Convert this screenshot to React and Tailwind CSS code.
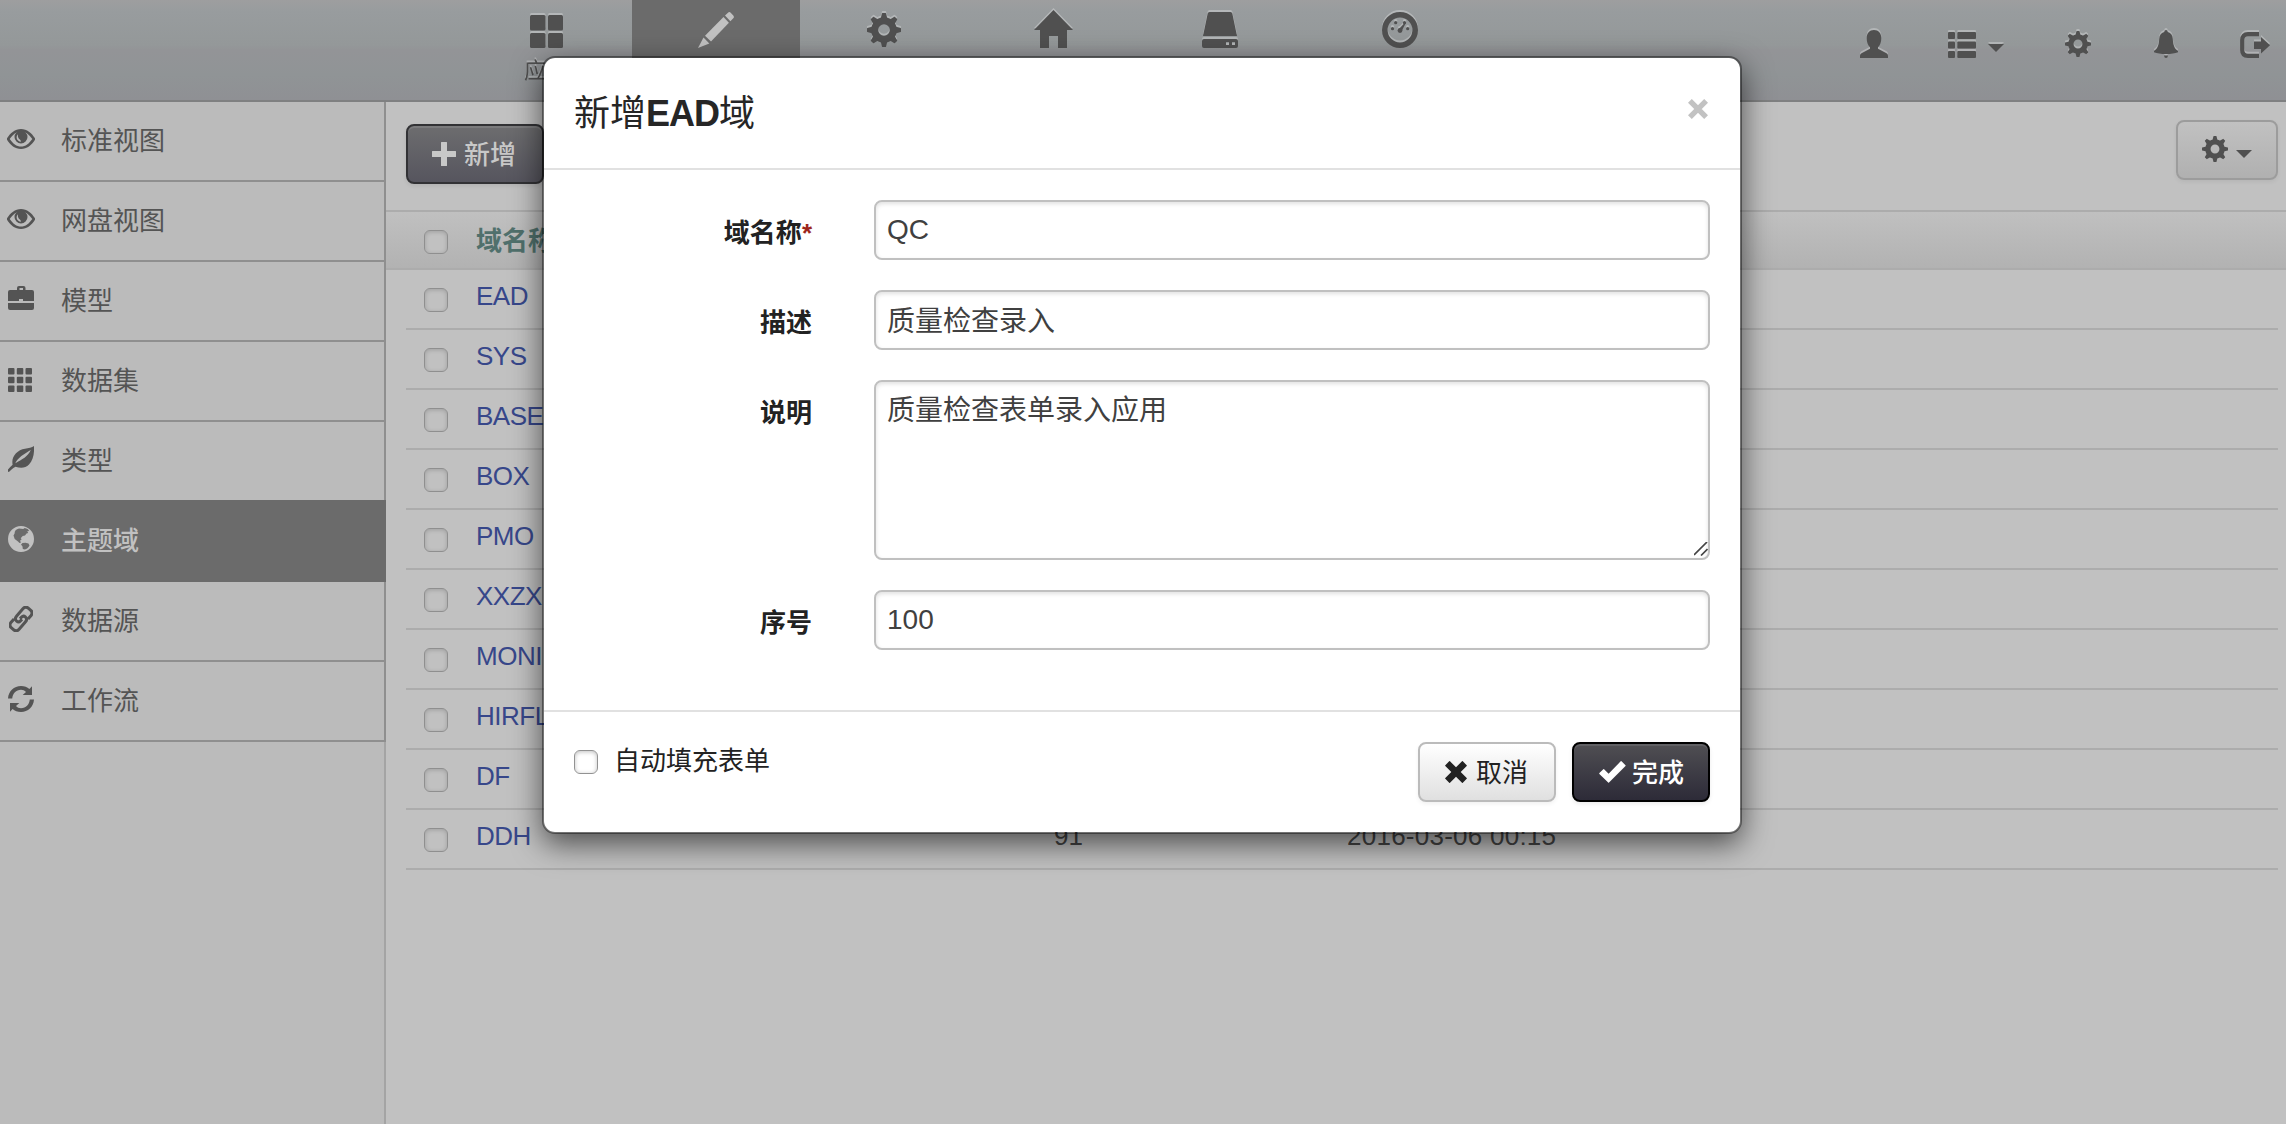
import React from "react";

const svgBase = "block shrink-0 fill-current";

const ThLarge = ({ className }) => (
  <svg viewBox="0 0 33 33" className={`${svgBase} ${className}`}>
    <rect width="15.5" height="15.5" rx="1.5" />
    <rect x="18" width="15" height="15.5" rx="1.5" />
    <rect y="18" width="15.5" height="15" rx="1.5" />
    <rect x="18" y="18" width="15" height="15" rx="1.5" />
  </svg>
);

const Pencil = ({ className }) => (
  <svg viewBox="0 0 36 36" className={`${svgBase} ${className}`}>
    <path d="M30 .7c.8-.8 1.9-.8 2.7 0l2.6 2.9c.8.8.8 1.9 0 2.7L32.4 9.2 27 3.5z" />
    <path d="M25.5 5l5.4 5.7L13 29.6 7 23.8z" />
    <path d="M5.500 25.500l5.800 6L0 36z" />
  </svg>
);

const Cog = ({ className }) => (
  <svg viewBox="0 0 34 34" className={`${svgBase} ${className}`}>
    <circle cx="17" cy="17" r="9.3" fill="none" stroke="currentColor" strokeWidth="7" />
    {[0, 45, 90, 135, 180, 225, 270, 315].map((a) => (
      <path
        key={a}
        transform={`rotate(${a} 17 17)`}
        d="M15 .3q.2-.3.500-.3h3q.3 0 .5.300L20.400 5.800h-6.800z"
      />
    ))}
  </svg>
);

const Home = ({ className }) => (
  <svg viewBox="0 0 39 38" className={`${svgBase} ${className}`}>
    <path d="M19.500 0L39 20h-6v18h-9V26h-9v12H6V20H0z" />
  </svg>
);

const Hdd = ({ className }) => (
  <svg viewBox="0 0 36 36" className={`${svgBase} ${className}`}>
    <path d="M7.500 0h21q1.500 0 1.800 1.500L35 24H1L5.700 1.500Q6 0 7.500 0z" />
    <path
      fillRule="evenodd"
      d="M2 27h32q2 0 2 2v5q0 2-2 2H2q-2 0-2-2v-5q0-2 2-2zM24 30v3h3v-3zM30 30v3h3v-3z"
    />
  </svg>
);

const Dashboard = ({ className }) => (
  <svg viewBox="0 0 36 36" className={`${svgBase} ${className}`}>
    <circle cx="18" cy="18" r="15.2" fill="none" stroke="currentColor" strokeWidth="5.6" />
    <circle cx="18" cy="18.5" r="2.4" />
    <circle cx="13.700" cy="10.700" r="1.6" />
    <circle cx="22.500" cy="10.700" r="1.6" />
    <circle cx="10.500" cy="16.700" r="1.6" />
    <circle cx="25.700" cy="16.700" r="1.6" />
    <path d="M16.500 17.500l6.500-7 .8.6L19.500 19.500z" />
  </svg>
);

const User = ({ className }) => (
  <svg viewBox="0 0 28 28" className={`${svgBase} ${className}`}>
    <path d="M14 0c4.500 0 7.300 3 7.300 8 0 4-1 7-3.300 9.200v1.600l8.500 4.500q1.500.9 1.500 2.400V28H0v-2.300q0-1.500 1.500-2.400l8.500-4.500v-1.600C7.700 15 6.700 12 6.700 8 6.700 3 9.500 0 14 0z" />
  </svg>
);

const ThList = ({ className }) => (
  <svg viewBox="0 0 28 26" className={`${svgBase} ${className}`}>
    {[0, 9.5, 19].map((y) => (
      <g key={y}>
        <rect y={y} width="7" height="7" rx="1" />
        <rect x="9.3" y={y} width="18.7" height="7" rx="1" />
      </g>
    ))}
  </svg>
);

const Bell = ({ className }) => (
  <svg viewBox="0 0 24 28" className={`${svgBase} ${className}`}>
    <path d="M12 0q1.600 0 1.800 2c3.400 1 4.700 3.500 5 7 .3 6 1.500 9.500 5.200 12v1.200c-3 1.200-7 1.800-12 1.800S3 23.400 0 22.200V21c3.700-2.500 4.900-6 5.200-12 .300-3.500 1.600-6 5-7Q10.400 0 12 0z" />
    <path d="M10 25.400h4Q13.600 28 12 28t-2-2.600z" />
  </svg>
);

const LogOut = ({ className }) => (
  <svg viewBox="0 0 30 26" className={`${svgBase} ${className}`}>
    <path d="M19 2.200H8Q2.200 2.200 2.200 8v10Q2.200 23.800 8 23.800h11" fill="none" stroke="currentColor" strokeWidth="4.2" />
    <path d="M14 9.500h7V5l9 8.200-9 8.300V17h-7z" />
  </svg>
);

const Eye = ({ className }) => (
  <svg viewBox="0 0 28 20" className={`${svgBase} ${className}`}>
    <path
      fillRule="evenodd"
      d="M14 0c6 0 10.600 4 14 9.300v1.400C24.600 16 20 20 14 20S3.400 16 0 10.700V9.300C3.400 4 8 0 14 0zM14 2.400C9.600 2.400 5.800 5.500 2.700 10c3.100 4.500 6.900 7.600 11.300 7.600s8.200-3.100 11.300-7.600C22.200 5.500 18.400 2.400 14 2.400z"
    />
    <path
      fillRule="evenodd"
      d="M14 1.500a6.500 6.500 0 1 1 0 13 6.500 6.500 0 0 1 0-13zM10.700 5.300C8.700 8 9.600 11.700 13.500 13c.6-1 .2-2-.7-2.600-1.700-1.100-2-2.900-2.100-5.100z"
    />
  </svg>
);

const Briefcase = ({ className }) => (
  <svg viewBox="0 0 26 24" className={`${svgBase} ${className}`}>
    <path
      fillRule="evenodd"
      d="M11 0h4.500Q17.500 0 17.500 2v2H24q2 0 2 2v9H15v-2h-4v2H0V6q0-2 2-2h7V2q0-2 2-2zM11.500 2v2H15V2z"
    />
    <path d="M0 17h26v5q0 2-2 2H2q-2 0-2-2z" />
  </svg>
);

const Th = ({ className }) => (
  <svg viewBox="0 0 24 24" className={`${svgBase} ${className}`}>
    {[0, 8.8, 17.5].map((y) =>
      [0, 8.8, 17.5].map((x) => <rect key={`${x}-${y}`} x={x} y={y} width="6.5" height="6.5" rx="1" />)
    )}
  </svg>
);

const Leaf = ({ className }) => (
  <svg viewBox="0 0 26 26" className={`${svgBase} ${className}`}>
    <path
      fillRule="evenodd"
      d="M26 0c.4 8-.8 14-5 18.500-3.500 3.700-8.500 3.700-13.500 2.200C5 22 3 23.500 1.500 25.500L0 26v-2.500C1.500 21.500 3 20 4.600 18.700 3 10.500 9 4 17 2.700 20.500 2.200 24 1.500 26 0zM22.800 4C18 7 12.500 9.500 8 15.800l-.6 1.400C14 13.500 20 10.500 22.800 4z"
    />
  </svg>
);

const Globe = ({ className }) => (
  <svg viewBox="0 0 26 26" className={`${svgBase} ${className}`}>
    <path
      fillRule="evenodd"
      d="M13 0a13 13 0 1 1 0 26 13 13 0 0 1 0-26zM11 2.500C8 3 6.500 5 6.600 7.500L5.500 9.500l1.200 3.500L10 15.500l1.500 1.500 1.500-.500-1-1.800 1.700-1.400-1-1 2-2.300 2.300-.5 1.500-2 1.700-.5-1-1.700 2-.3-1.500-2-3-1-1.500 1zM14.500 17l-1.500 1.500 1.500 2 .3 2.500 2 .6c2-.6 3.500-2 4.700-4.200l-1-1.900-3-.8z"
    />
  </svg>
);

const Link = ({ className }) => (
  <svg viewBox="0 0 24 26" className={`${svgBase} ${className}`}>
    <g transform="translate(12 13) rotate(-49)" fill="none" stroke="currentColor" strokeWidth="3">
      <path d="M4.500 5.300H9Q13 5.300 13 1.300V-1.300Q13-5.300 9-5.300H-.5Q-4.500-5.300-4.500-1.800Q-4.500.8-1.500.8H.5" />
      <path d="M-4.500-5.300H-9Q-13-5.300-13-1.300V1.300Q-13 5.300-9 5.300H.5Q4.500 5.300 4.500 1.800Q4.500-.8 1.500-.8H-.5" />
    </g>
  </svg>
);

const Refresh = ({ className }) => (
  <svg viewBox="0 0 26 26" className={`${svgBase} ${className}`}>
    <path d="M0 12.500C.5 5 6 0 13 0c3.500 0 6.200 1 8.400 3L24 .3v8.700h-9.300l3.300-3C16.600 4.500 15 3.800 13 3.800c-5 0-8.300 3.700-8.800 8.700z" />
    <path d="M26 13.500C25.500 21 20 26 13 26c-3.500 0-6.200-1-8.400-3L2 25.700V17h9.300L8 20c1.400 1.500 3 2.200 5 2.200 5 0 8.300-3.700 8.800-8.700z" />
  </svg>
);

const Plus = ({ className }) => (
  <svg viewBox="0 0 24 24" className={`${svgBase} ${className}`}>
    <path d="M9.500 0h5q.5 0 .5.500V9h8.500q.5 0 .5.500v5q0 .5-.5.500H15v8.500q0 .5-.5.500h-5q-.5 0-.5-.5V15H.5q-.5 0-.5-.5v-5Q0 9 .5 9H9V.5Q9 0 9.500 0z" />
  </svg>
);

const Remove = ({ className }) => (
  <svg viewBox="0 0 22 22" className={`${svgBase} ${className}`}>
    <path d="M5 .3L11 6.300l6-6q.4-.4.8 0l3.900 3.900q.4.400 0 .8L15.700 11l6 6q.4.400 0 .8l-3.900 3.900q-.4.400-.8 0l-6-6-6 6q-.4.400-.8 0L.3 17.800q-.4-.4 0-.8l6-6-6-6q-.4-.4 0-.8L4.200.3q.4-.4.8 0z" />
  </svg>
);

const Ok = ({ className }) => (
  <svg viewBox="0 0 27 22" className={`${svgBase} ${className}`}>
    <path d="M21.700.3q.4-.4.8 0l4 3.900q.4.400 0 .8L10 21.600q-.4.400-.8 0L.4 12.900q-.4-.4 0-.8l3.900-3.900q.4-.4.8 0l4.500 4.500z" />
  </svg>
);

const Close = ({ className }) => (
  <svg viewBox="0 0 20 20" className={`block shrink-0 ${className}`} fill="none" stroke="currentColor" strokeWidth="5.4">
    <path d="M1.900 1.900L18.100 18.100M18.100 1.900L1.900 18.100" />
  </svg>
);

const Caret = ({ className }) => (
  <svg viewBox="0 0 16 8" className={`${svgBase} ${className}`}>
    <path d="M0 0h16L8 8z" />
  </svg>
);

const etched = "[filter:drop-shadow(0_-2px_0_rgba(255,255,255,0.28))]";

const tabs = [
  { icon: ThLarge, size: "w-[33px] h-[33px]", pad: "pt-[15px]", width: "w-[172px]", label: "应用" },
  { icon: Pencil, size: "w-9 h-9", pad: "pt-3", width: "w-[168px]", active: true },
  { icon: Cog, size: "w-[34px] h-[34px]", pad: "pt-[13px]", width: "w-[168px]" },
  { icon: Home, size: "w-[39px] h-[38px]", pad: "pt-2.5", width: "w-[171px]" },
  { icon: Hdd, size: "w-9 h-9", pad: "pt-3", width: "w-[162px]" },
  { icon: Dashboard, size: "w-9 h-9", pad: "pt-3", width: "w-[198px]" },
];

const menu = [
  { icon: Eye, size: "w-7 h-5", text: "标准视图", shift: "-ml-px -mt-1" },
  { icon: Eye, size: "w-7 h-5", text: "网盘视图", shift: "-ml-px -mt-1" },
  { icon: Briefcase, size: "w-[26px] h-6", text: "模型", shift: "-mt-1.5" },
  { icon: Th, size: "w-6 h-6", text: "数据集", shift: "-mt-0.5" },
  { icon: Leaf, size: "w-[26px] h-[26px]", text: "类型", shift: "-mt-1" },
  { icon: Globe, size: "w-[26px] h-[26px]", text: "主题域", shift: "-mt-1", active: true },
  { icon: Link, size: "w-6 h-[26px]", text: "数据源", shift: "ml-px -mt-1" },
  { icon: Refresh, size: "w-[26px] h-[26px]", text: "工作流", shift: "-mt-1" },
];

const rows = [
  { name: "EAD" },
  { name: "SYS" },
  { name: "BASE" },
  { name: "BOX" },
  { name: "PMO" },
  { name: "XXZX" },
  { name: "MONI" },
  { name: "HIRFL" },
  { name: "DF" },
  { name: "DDH", order: "91", time: "2016-03-06 00:15" },
];

const Check = ({ dim }) => (
  <span
    className={
      dim
        ? "block size-6 shrink-0 rounded-[6px] border border-[#8f8f8f] bg-[#c1c1c1] shadow-[inset_0_1px_4px_rgba(0,0,0,0.18)]"
        : "block size-6 shrink-0 rounded-[6px] border border-[#929292] bg-white shadow-[inset_0_1px_4px_rgba(0,0,0,0.25)]"
    }
  />
);

const Field = ({ label, required, children, tall }) => (
  <div className={tall ? "flex h-[180px]" : "flex h-[60px]"}>
    <div className="mr-[62px] flex h-[60px] w-[239px] items-center justify-end pt-1.5 text-[26px] font-bold text-[#222]">
      {label}
      {required && <span className="text-[#9d261d]">*</span>}
    </div>
    {children}
  </div>
);

const inputClass =
  "w-[836px] rounded-[8px] border-2 border-[#c0c0c0] bg-white px-[11px] text-[28px] text-[#404040] shadow-[inset_0_2px_4px_rgba(0,0,0,0.12)] outline-none";

export default function App() {
  return (
    <div className="relative h-[1124px] w-full overflow-hidden bg-[#c1c1c1] font-['Liberation_Sans','Noto_Sans_CJK_SC',sans-serif] text-[26px] leading-[40px] text-[#222]">
      <header className="flex h-[102px] justify-between border-b-2 border-[#7f8081] bg-[linear-gradient(to_bottom,#9e9e9f_0%,#989c9e_12%,#949899_45%,#939497_50%,#909496_75%,#8f9094_100%)] text-[#505050]">
        <nav className="flex pl-[460px]">
          {tabs.map(({ icon: Icon, size, pad, width, label, active }, i) => (
            <div
              key={i}
              className={`flex h-[100px] shrink-0 flex-col items-center ${pad} ${width} ${active ? "bg-[#6b6b6b] text-[#c1c1c1]" : etched}`}
            >
              <Icon className={size} />
              {label && <span className="mt-[7px] text-[22px] leading-[32px]">{label}</span>}
            </div>
          ))}
        </nav>
        <div className={`mr-4 flex h-[58px] items-end ${etched}`}>
          <User className="mr-[60px] h-7 w-7" />
          <ThList className="mr-3 h-[26px] w-7" />
          <Caret className="mr-[61px] mb-1.5 h-2 w-4" />
          <Cog className="mr-[63px] mb-px h-[26px] w-[26px]" />
          <Bell className="mr-[62px] h-7 w-6" />
          <LogOut className="h-[26px] w-[30px]" />
        </div>
      </header>

      <div className="flex h-[1022px]">
        <aside className="w-[386px] shrink-0 border-r-2 border-[#a4a4a4] bg-[#bbb]">
          {menu.map(({ icon: Icon, size, text, shift, active }) => (
            <div
              key={text}
              className={
                active
                  ? "relative -mt-0.5 -mr-0.5 flex h-[82px] items-center bg-[#6b6b6b] pl-2 text-[#c1c1c1]"
                  : "-mr-0.5 flex h-20 items-center border-r-2 border-b-2 border-[#8f8f8f] pl-2 text-[#545454]"
              }
            >
              <div className="flex w-[53px]">
                <Icon className={`${size} ${shift}`} />
              </div>
              <span className={active ? "font-medium" : ""}>{text}</span>
            </div>
          ))}
        </aside>

        <main className="min-w-0 flex-1">
          <div className="flex h-[108px] items-start justify-between pr-2 pl-5">
            <button className="mt-[22px] flex h-[60px] w-[138px] items-center rounded-[8px] border-2 border-[#323235] bg-gradient-to-b from-[#6d6d6f] to-[#56555e] pl-6 font-medium text-[#c8c8c8] shadow-[inset_0_2px_0_rgba(255,255,255,0.1),0_2px_4px_rgba(0,0,0,0.08)]">
              <Plus className="mr-2 h-6 w-6" />
              <span className="pt-0.5">新增</span>
            </button>
            <button className="mt-[18px] flex h-[60px] w-[102px] rounded-[8px] border-2 border-[#9c9c9c] bg-gradient-to-b from-[#c1c1c1] to-[#b0b0b0] pl-6 text-[#505050] shadow-[0_2px_4px_rgba(0,0,0,0.06)]">
              <Cog className="mt-3.5 mr-2 h-[26px] w-[26px]" />
              <Caret className="mt-7 h-2 w-4" />
            </button>
          </div>
          <div className="flex h-[60px] items-center border-y-2 border-[#acacac] bg-gradient-to-b from-[#c0c0c0] to-[#b2b2b2] pl-[38px] font-bold text-[#50706c]">
            <div className="flex w-[52px] pt-1">
              <Check dim />
            </div>
            <span className="pt-0.5">域名称</span>
          </div>
          <div className="mr-2 ml-5">
            {rows.map((r) => (
              <div key={r.name} className="flex h-[60px] border-b-2 border-[#acacac] pl-[18px]">
                <div className="w-[52px] pt-[18px]">
                  <Check dim />
                </div>
                <div className="w-[578px] pt-1.5 tracking-[-0.5px] text-[#37478a]">{r.name}</div>
                <div className="w-[293px] pt-1.5 text-[#454545]">{r.order}</div>
                <div className="pt-1.5 tracking-[0.25px] text-[#454545]">{r.time}</div>
              </div>
            ))}
          </div>
        </main>
      </div>

      <div className="absolute top-14 left-[542px] h-[778px] w-[1200px] rounded-[13px] border-2 border-black/40 bg-white bg-clip-padding shadow-[0_10px_30px_rgba(0,0,0,0.6)]">
        <div className="flex h-28 items-start justify-between border-b-2 border-[#e1e1e1] pr-[32px] pl-[30px]">
          <h3 className="mt-9 text-[36px] leading-[40px] font-normal text-[#262626]">
            新增<span className="font-bold tracking-[-1px]">EAD</span>域
          </h3>
          <Close className="mt-[41px] h-5 w-5 text-[#c2c2c2]" />
        </div>
        <div className="flex h-[540px] flex-col gap-[30px] pt-[30px] pl-[29px]">
          <Field label="域名称" required>
            <input className={`${inputClass} h-[60px]`} defaultValue="QC" />
          </Field>
          <Field label="描述">
            <input className={`${inputClass} h-[60px] pb-0.5`} defaultValue="质量检查录入" />
          </Field>
          <Field label="说明" tall>
            <textarea className={`${inputClass} h-[180px] resize-none pt-[9px]`} defaultValue="质量检查表单录入应用" />
            <svg viewBox="0 0 14 14" className="mt-[162px] -ml-4 h-3.5 w-3.5 stroke-[#444]" fill="none" strokeWidth="1.7">
              <path d="M0 13L13 0M7 13.500L13.500 7" />
            </svg>
          </Field>
          <Field label="序号">
            <input className={`${inputClass} h-[60px]`} defaultValue="100" />
          </Field>
        </div>
        <div className="flex items-start justify-between border-t-2 border-[#e1e1e1] pr-[30px] pl-[30px]">
          <label className="mt-[28px] flex">
            <span className="mt-2.5 mr-4">
              <Check />
            </span>
            <span className="pt-px">自动填充表单</span>
          </label>
          <div className="mt-[30px] flex gap-4">
            <button className="flex h-[60px] w-[138px] items-center rounded-[8px] border-2 border-[#bbb] bg-gradient-to-b from-white to-[#e0e0e0] pl-[25px] text-[#222] shadow-[0_2px_4px_rgba(0,0,0,0.06)]">
              <Remove className="mr-[9px] h-[22px] w-[22px]" />
              <span className="pt-0.5">取消</span>
            </button>
            <button className="flex h-[60px] w-[138px] items-center rounded-[8px] border-2 border-black bg-gradient-to-b from-[#504f53] to-[#2d2b38] pl-[25px] font-medium text-white shadow-[inset_0_2px_0_rgba(255,255,255,0.1),0_2px_4px_rgba(0,0,0,0.08)]">
              <Ok className="mr-1.5 h-[22px] w-[27px]" />
              <span className="pt-0.5">完成</span>
            </button>
          </div>
        </div>
      </div>
    </div>
  );
}
